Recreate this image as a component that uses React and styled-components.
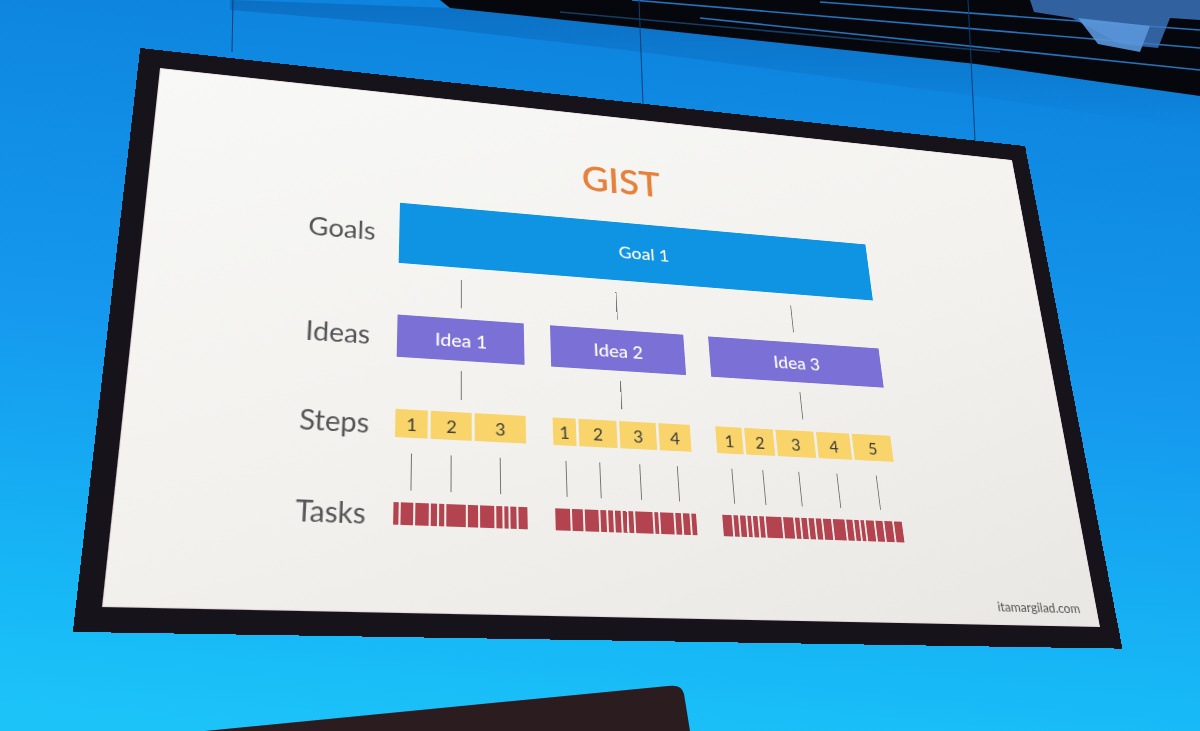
import * as React from 'react'
import styled, { createGlobalStyle } from 'styled-components'

// the slide is laid out flat, then bent onto the screen seen in the photo
const SLIDE_W = 1000;
const SLIDE_H = 562;
const FRAME = 22;
const SCREEN_QUAD = [[160, 68], [1012, 160], [1100, 627], [102, 607]];

const quadToMatrix3d = (w, h, pts) => {
    const [[x0, y0], [x1, y1], [x2, y2], [x3, y3]] = pts;
    const dx1 = x1 - x2, dx2 = x3 - x2, dx3 = x0 - x1 + x2 - x3;
    const dy1 = y1 - y2, dy2 = y3 - y2, dy3 = y0 - y1 + y2 - y3;
    const det = dx1 * dy2 - dx2 * dy1;
    const g = (dx3 * dy2 - dx2 * dy3) / det;
    const k = (dx1 * dy3 - dx3 * dy1) / det;
    const a = x1 - x0 + g * x1;
    const b = x3 - x0 + k * x3;
    const d = y1 - y0 + g * y1;
    const e = y3 - y0 + k * y3;
    const m = [a / w, d / w, 0, g / w, b / h, e / h, 0, k / h, 0, 0, 1, 0, x0, y0, 0, 1];
    return `matrix3d(${m.map(n => n.toFixed(8)).join(',')})`;
};

const SCREEN_TRANSFORM = `${quadToMatrix3d(SLIDE_W, SLIDE_H, SCREEN_QUAD)} translate(-${FRAME}px, -${FRAME}px)`;

const GlobalStyle = createGlobalStyle`
    html, body {
        margin: 0;
        padding: 0;
        background: #1590e6;
        overflow: hidden;
    }
`;

const Stage = styled.div`
    position: relative;
    width: 1200px;
    height: 731px;
    overflow: hidden;
`;

const Backdrop = styled.svg`
    position: absolute;
    inset: 0;
    display: block;
`;

const Frame = styled.div`
    position: absolute;
    top: 0;
    left: 0;
    width: ${SLIDE_W}px;
    height: ${SLIDE_H}px;
    border: ${FRAME}px solid #16131b;
    transform-origin: 0 0;
    transform: ${SCREEN_TRANSFORM};
`;

const Slide = styled.div`
    width: 100%;
    height: 100%;
    display: flex;
    flex-direction: column;
    background: linear-gradient(160deg, #f8f8f6 0%, #f2f1ee 55%, #e9e7e3 100%);
    font-family: Lato, "Open Sans", sans-serif;
    box-shadow: inset 0 0 0 1px #e6d9dc;
`;

const Title = styled.h1`
    margin: 61px 0 0;
    text-align: center;
    font-size: 42px;
    line-height: 1;
    font-weight: 600;
    color: #e6803b;
`;

const Diagram = styled.div`
    margin-top: 31px;
    padding-left: 151px;
    display: grid;
    grid-template-columns: 90px 533px;
    grid-template-rows: 70px 58px 46px 55px 29px 65px 22px;
    column-gap: 14px;
`;

const RowLabel = styled.div`
    grid-column: 1;
    grid-row: ${props => props.row};
    align-self: center;
    justify-self: center;
    font-size: 28px;
    line-height: 1;
    color: #555558;
    white-space: nowrap;
`;

const GoalBar = styled.div`
    grid-column: 2;
    grid-row: 1;
    display: flex;
    align-items: center;
    justify-content: center;
    background: #0f94e3;
    color: #ffffff;
    font-size: 20px;
    font-weight: 500;
`;

const Groups = styled.div`
    grid-column: 2;
    grid-row: 2 / 8;
    display: flex;
    gap: 28px;
`;

const Group = styled.div`
    width: ${props => props.width}px;
    display: flex;
    flex-direction: column;
`;

const Link = styled.div`
    box-sizing: border-box;
    height: ${props => props.height}px;
    padding: ${props => props.top}px 0 ${props => props.bottom}px;
    display: flex;
    justify-content: center;

    &::before {
        content: '';
        width: 1px;
        background: #767676;
    }
`;

const IdeaBox = styled.div`
    height: 46px;
    display: flex;
    align-items: center;
    justify-content: center;
    background: #7a70d5;
    color: #ffffff;
    font-size: 20px;
    font-weight: 500;
`;

const StepsRow = styled.div`
    display: flex;
    gap: 3px;
`;

const StepColumn = styled.div`
    flex: ${props => props.grow} 1 0;
    display: flex;
    flex-direction: column;
`;

const StepBox = styled.div`
    height: 29px;
    display: flex;
    align-items: center;
    justify-content: center;
    background: #f8d46b;
    color: #3b3b3b;
    font-size: 18px;
`;

const TaskBar = styled.div`
    height: 22px;
    display: flex;
    gap: 2px;
`;

const TaskChunk = styled.div`
    flex: ${props => props.grow} 1 0;
    background: #b3434f;
`;

const Footer = styled.div`
    margin-top: auto;
    align-self: flex-end;
    padding: 0 20px 12px 0;
    font-size: 14px;
    line-height: 1;
    color: #555;
`;

const ideas = [
    {
        name: 'Idea 1', width: 131,
        steps: [33, 41, 53],
        tasks: [12, 32, 36, 14, 15, 50, 26, 37, 15, 11, 16, 24]
    },
    {
        name: 'Idea 2', width: 146,
        steps: [24, 40, 39, 34],
        tasks: [40, 28, 37, 14, 14, 14, 12, 13, 46, 12, 36, 14, 18, 14]
    },
    {
        name: 'Idea 3', width: 199,
        steps: [29, 32, 42, 38, 45],
        tasks: [25, 12, 15, 11, 12, 13, 40, 29, 13, 15, 14, 15, 22, 32, 17, 12, 12, 22, 19, 22, 23]
    }
];

const Room = () => (
    <Backdrop width="1200" height="731" viewBox="0 0 1200 731">
        <defs>
            <linearGradient id="wall" x1="0.35" y1="0" x2="0.2" y2="1">
                <stop offset="0" stopColor="#0d84de" />
                <stop offset="0.45" stopColor="#1598ee" />
                <stop offset="0.85" stopColor="#17b9f6" />
                <stop offset="1" stopColor="#1cc3f9" />
            </linearGradient>
            <linearGradient id="shade" x1="0" y1="0" x2="0" y2="1">
                <stop offset="0" stopColor="#0a5fae" stopOpacity="0.55" />
                <stop offset="1" stopColor="#0a5fae" stopOpacity="0" />
            </linearGradient>
        </defs>
        <rect width="1200" height="731" fill="url(#wall)" />
        <polygon points="230,0 450,8 641,28 976,64 1200,96 1200,130 976,96 641,52 420,26 230,10" fill="url(#shade)" />
        <polygon points="440,0 1200,0 1200,96 1100,82 976,64 641,28 450,8" fill="#05070c" />
        <g stroke="#2b86da" strokeWidth="1.6" fill="none" opacity="0.85">
            <line x1="632" y1="0" x2="1200" y2="48" />
            <line x1="820" y1="2" x2="1200" y2="30" />
            <line x1="700" y1="18" x2="1200" y2="70" />
            <line x1="560" y1="12" x2="1000" y2="52" strokeOpacity="0.5" />
        </g>
        <polygon points="1030,0 1200,0 1200,20 1170,18 1158,48 1120,44 1072,18 1034,12" fill="#3d78c4" opacity="0.8" />
        <polygon points="1078,18 1150,26 1140,52 1098,44" fill="#5a97dc" opacity="0.9" />
        <g stroke="#0a3f7a" strokeWidth="1" fill="none">
            <line x1="233" y1="0" x2="232" y2="52" />
            <line x1="639" y1="0" x2="643" y2="104" />
            <line x1="968" y1="0" x2="975" y2="140" />
        </g>
        <path d="M205 731 L668 686 Q682 684 684 694 L690 731 Z" fill="#2a1c1f" />
    </Backdrop>
);

const App = () => (
    <Stage>
        <GlobalStyle />
        <Room />
        <Frame>
            <Slide>
                <Title>GIST</Title>
                <Diagram>
                    <RowLabel row={1}>Goals</RowLabel>
                    <RowLabel row={3}>Ideas</RowLabel>
                    <RowLabel row={5}>Steps</RowLabel>
                    <RowLabel row={7}>Tasks</RowLabel>
                    <GoalBar>Goal 1</GoalBar>
                    <Groups>
                        {ideas.map(idea => (
                            <Group key={idea.name} width={idea.width}>
                                <Link height={58} top={14} bottom={12} />
                                <IdeaBox>{idea.name}</IdeaBox>
                                <Link height={55} top={11} bottom={13} />
                                <StepsRow>
                                    {idea.steps.map((grow, i) => (
                                        <StepColumn key={i} grow={grow}>
                                            <StepBox>{i + 1}</StepBox>
                                            <Link height={65} top={16} bottom={12} />
                                        </StepColumn>
                                    ))}
                                </StepsRow>
                                <TaskBar>
                                    {idea.tasks.map((grow, i) => (
                                        <TaskChunk key={i} grow={grow} />
                                    ))}
                                </TaskBar>
                            </Group>
                        ))}
                    </Groups>
                </Diagram>
                <Footer>itamargilad.com</Footer>
            </Slide>
        </Frame>
    </Stage>
);

export default App;
